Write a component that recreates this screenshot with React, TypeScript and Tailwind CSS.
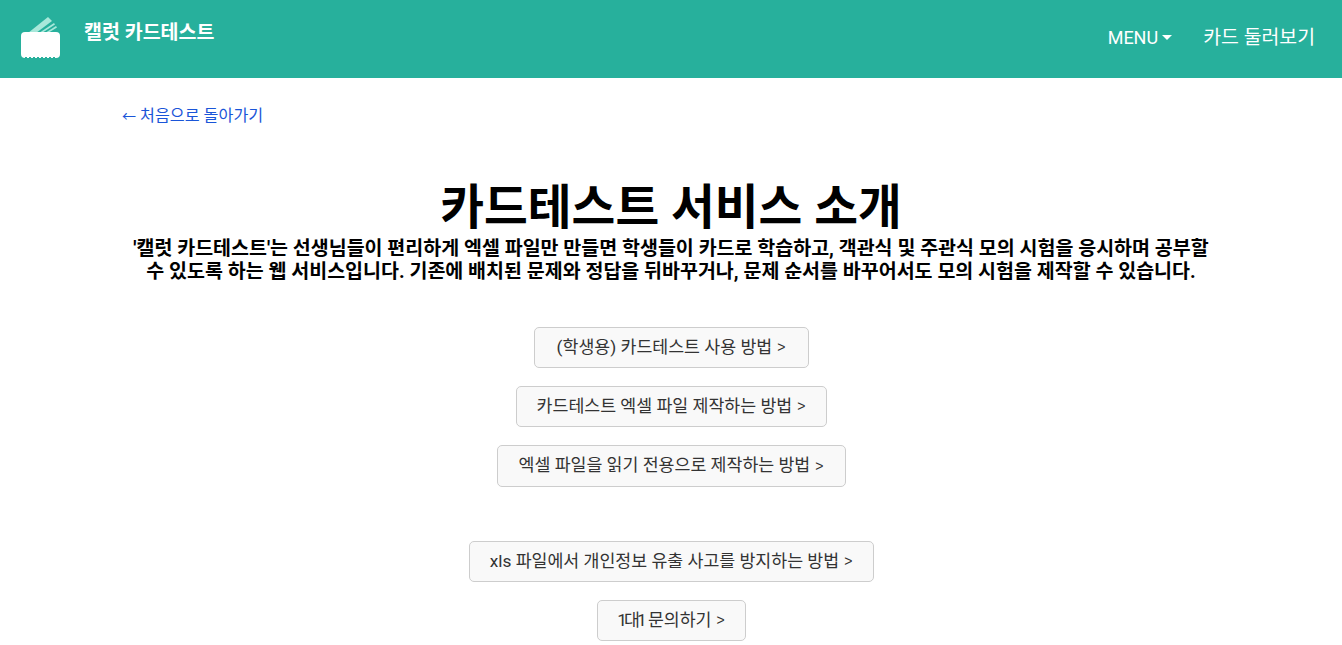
import type { ReactNode } from "react";

const font = "font-['Roboto','Noto_Sans_CJK_KR',sans-serif]";

const buttons: { id: number; label: ReactNode; cls: string }[] = [
  { id: 1, label: "(학생용) 카드테스트 사용 방법", cls: "h-[41px] w-[275px] mb-[18px]" },
  { id: 2, label: "카드테스트 엑셀 파일 제작하는 방법", cls: "h-[41px] w-[311px] mb-[18px]" },
  { id: 3, label: "엑셀 파일을 읽기 전용으로 제작하는 방법", cls: "h-[42px] w-[349px] mb-[54px]" },
  { id: 4, label: "xls 파일에서 개인정보 유출 사고를 방지하는 방법", cls: "h-[41px] w-[405px] mb-[18px]" },
  {
    id: 5,
    label: (
      <>
        <span className="tracking-[-3px]">1대1</span> 문의하기
      </>
    ),
    cls: "h-[41px] w-[149px]",
  },
];

function Logo() {
  return (
    <svg width="42" height="42" viewBox="0 0 42 42" className="block">
      <path d="M8 17 L28 1 L32 5 L16 17 Z" fill="#a8e8da" />
      <path d="M19 17 L34 7 L35 8.5 L22 17 Z" fill="#a8e8da" />
      <path d="M25 17 L36 10 L37 11.5 L28 17 Z" fill="#a8e8da" />
      <rect x="1" y="16" width="39" height="26" rx="4" fill="#fff" />
      <line x1="5" y1="41.5" x2="36" y2="41.5" stroke="#27b09c" strokeWidth="1" strokeDasharray="2 2" />
    </svg>
  );
}

export default function App() {
  return (
    <div className={`${font} min-h-screen bg-white`}>
      {/* Navbar */}
      <nav className="flex h-[78px] items-start justify-between bg-[#27b09c] text-white">
        <div className="flex items-start pl-[20px] pt-[16px]">
          <Logo />
          <span className="ml-[22px] mt-[3px] text-[19.5px] leading-[27px] font-bold">캘럿 카드테스트</span>
        </div>
        <div className="flex items-center pr-[27px] pt-[23px] text-[18px] leading-[30px]">
          <span className="flex items-center">
            MENU
            <span className="ml-[4px] mt-[-1px] h-0 w-0 border-x-[5px] border-t-[5px] border-x-transparent border-t-white" />
          </span>
          <span className="ml-[31px] text-[19.4px]">카드 둘러보기</span>
        </div>
      </nav>

      {/* Back link */}
      <div className="px-[122px] pt-[26px]">
        <a href="#" className="block text-[16.2px] leading-[24px] text-[#1a55d8]">
          <span className="text-[14px]">←</span> 처음으로 돌아가기
        </a>
      </div>

      <main className="flex flex-col items-center">
        <h1 className="mt-[51px] text-center text-[47.6px] leading-[58px] font-bold text-black">
          카드테스트 서비스 소개
        </h1>
        <p className="w-[1098px] text-center text-[19.5px] leading-[23px] font-bold text-black">
          '캘럿 카드테스트'는 선생님들이 편리하게 엑셀 파일만 만들면 학생들이 카드로 학습하고, 객관식 및 주관식 모의 시험을 응시하며 공부할 수 있도록 하는 웹 서비스입니다. 기존에 배치된 문제와 정답을 뒤바꾸거나, 문제 순서를 바꾸어서도 모의 시험을 제작할 수 있습니다.
        </p>

        <div className="mt-[44px] flex flex-col items-center">
          {buttons.map((b) => (
            <button
              key={b.id}
              className={`${b.cls} flex items-center justify-center gap-[5px] rounded-[5px] border border-[#cdcdcd] bg-[#f9f9f9] text-[17.3px] text-[#333]`}
            >
              <span>{b.label}</span>
              <span className="font-['Liberation_Sans',sans-serif] text-[14px]">&gt;</span>
            </button>
          ))}
        </div>
      </main>
    </div>
  );
}
